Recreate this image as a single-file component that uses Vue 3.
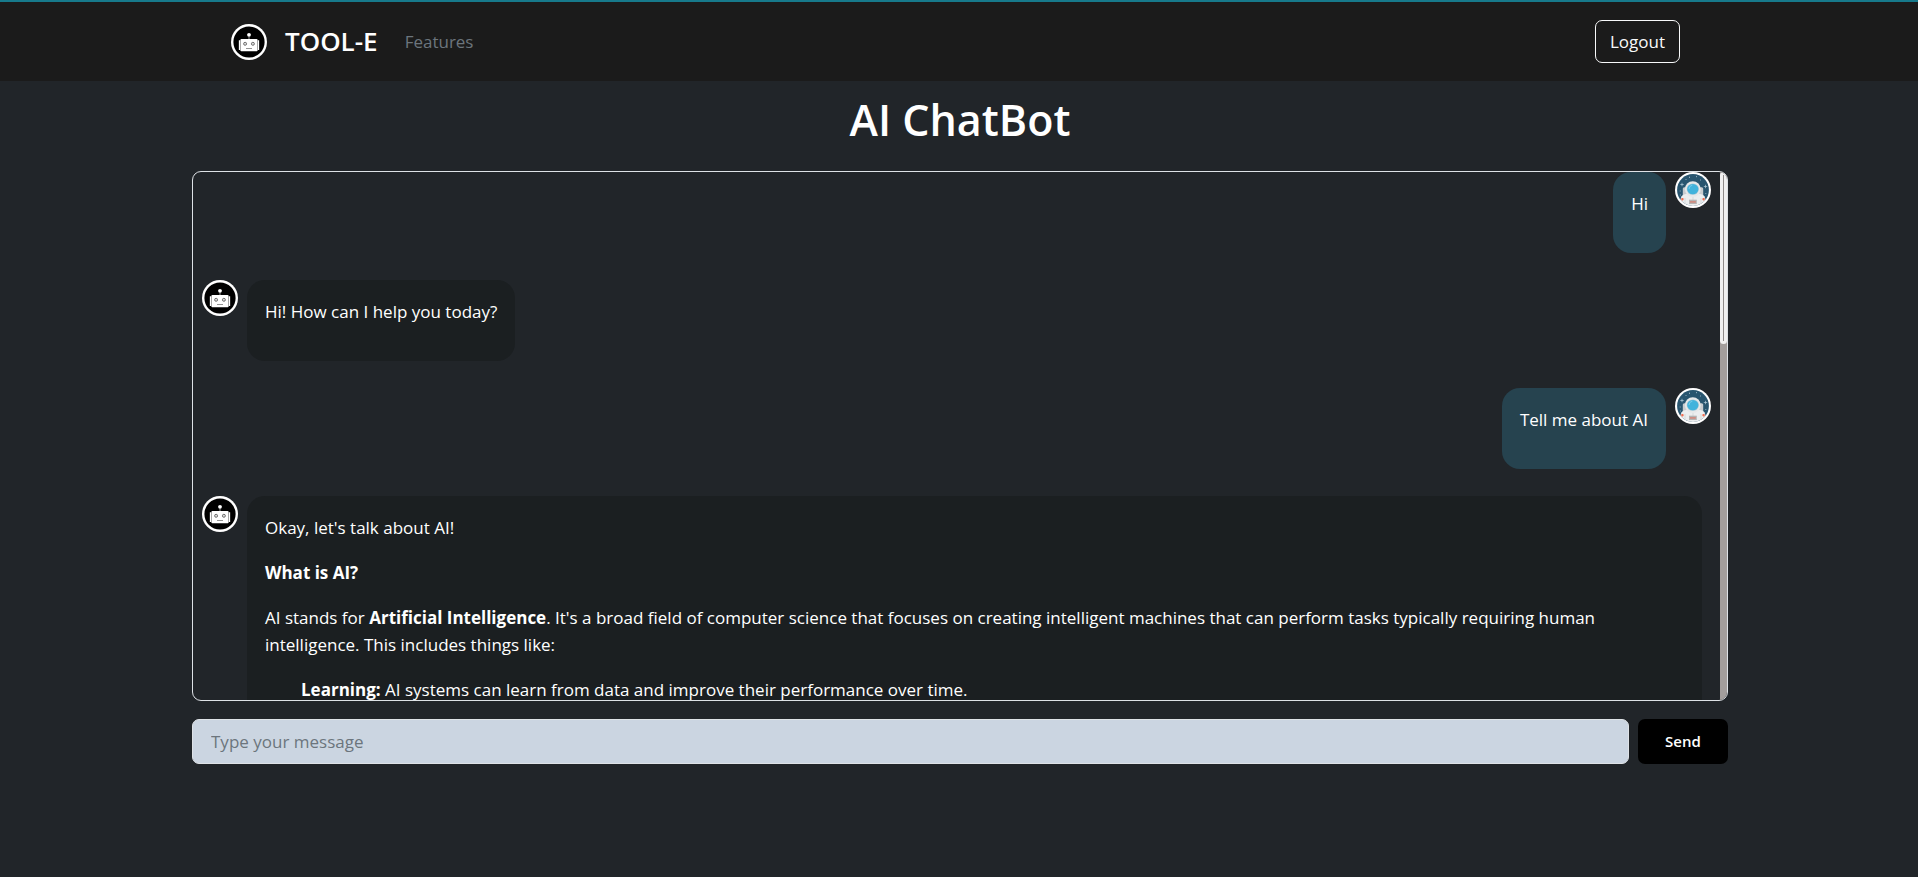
<script setup>
import { ref, h } from 'vue'

const draft = ref('')

const RobotAvatar = () =>
  h('svg', { viewBox: '0 0 36 36', width: 36, height: 36, role: 'img', 'aria-label': 'Bot' }, [
    h('circle', { cx: 18, cy: 18, r: 18, fill: '#fff' }),
    h('circle', { cx: 18, cy: 18, r: 15.6, fill: '#000' }),
    h('circle', { cx: 18, cy: 10.8, r: 1.9, fill: '#fff' }),
    h('path', { d: 'M18 12v3.5', stroke: '#bbb', 'stroke-width': 0.8 }),
    h('rect', { x: 9.4, y: 15, width: 17.2, height: 12.2, rx: 1, fill: '#fff' }),
    h('path', { d: 'M8.5 16.3v9.6M27.5 16.3v9.6', stroke: '#fff', 'stroke-width': 1.3 }),
    h('circle', { cx: 14.1, cy: 19.8, r: 1.5, fill: '#ddd', stroke: '#555', 'stroke-width': 0.8 }),
    h('circle', { cx: 21.9, cy: 19.8, r: 1.5, fill: '#ddd', stroke: '#555', 'stroke-width': 0.8 }),
    h('path', { d: 'M15 24.5h6', stroke: '#777', 'stroke-width': 0.8 })
  ])

const AstronautAvatar = () =>
  h('svg', { viewBox: '0 0 36 36', width: 36, height: 36, role: 'img', 'aria-label': 'You' }, [
    h('circle', { cx: 18, cy: 18, r: 18, fill: '#fff' }),
    h('circle', { cx: 18, cy: 18, r: 15.9, fill: '#28556f' }),
    h('path', {
      d: 'M7 10.8v3.4M5.3 12.5h3.4M30.5 12.8v3.4M28.8 14.5h3.4M14.5 4.6v1.4M21.5 4v1.2M11 7v1M25.5 7.5v1M5.2 18.5v1M5.4 22.5v1M30.8 21v1',
      stroke: '#b4cfdb',
      'stroke-width': 0.7
    }),
    h('rect', { x: 7.8, y: 15.3, width: 20.4, height: 13, rx: 1.5, fill: '#c9cdd0' }),
    h('path', {
      d: 'M5.4 27.8Q6 23.4 9 22.4L13 21.5h10l4 .9Q30 23.4 30.6 27.8A15.9 15.9 0 0 1 5.4 27.8Z',
      fill: '#eceeef'
    }),
    h('path', { d: 'M10 26v5.6M26 26v5.6M18 25v3', stroke: '#cfd2d4', 'stroke-width': 0.7 }),
    h('circle', { cx: 17.8, cy: 17.2, r: 7.9, fill: '#e6e8e9' }),
    h('ellipse', { cx: 17.8, cy: 17.1, rx: 6.1, ry: 5.7, fill: '#a9cbd8' }),
    h('ellipse', { cx: 17.8, cy: 17.1, rx: 5.6, ry: 5.2, fill: '#41b3dc' }),
    h('path', { d: 'M14 17q.2-3.4 3.4-3.8', fill: 'none', stroke: '#77cdea', 'stroke-width': 1 }),
    h('rect', { x: 14, y: 27.7, width: 7.8, height: 4.3, fill: '#b4b4b4' }),
    h('rect', { x: 15, y: 29, width: 5.8, height: 1.8, fill: '#cf8d82' }),
    h('rect', { x: 6.2, y: 26, width: 2.4, height: 2.4, rx: 0.8, fill: '#ee6f54' }),
    h('rect', { x: 27.4, y: 26, width: 2.4, height: 2.4, rx: 0.8, fill: '#ee6f54' })
  ])
</script>

<template>
  <div class="page">
    <header class="navbar">
      <a class="brand" href="#"><RobotAvatar /><span>TOOL-E</span></a>
      <nav><a class="nav-link" href="#">Features</a></nav>
      <button class="logout" type="button">Logout</button>
    </header>

    <main class="content">
      <h1>AI ChatBot</h1>

      <section class="chat" aria-label="Conversation">
        <div class="messages">
          <article class="message user">
            <div class="bubble"><p>Hi</p></div>
            <AstronautAvatar />
          </article>
          <article class="message">
            <RobotAvatar />
            <div class="bubble"><p>Hi! How can I help you today?</p></div>
          </article>
          <article class="message user">
            <div class="bubble"><p>Tell me about AI</p></div>
            <AstronautAvatar />
          </article>
          <article class="message">
            <RobotAvatar />
            <div class="bubble">
              <p>Okay, let's talk about AI!</p>
              <p><strong>What is AI?</strong></p>
              <p>
                AI stands for <strong>Artificial Intelligence</strong>. It's a broad field of computer science that
                focuses on creating intelligent machines that can perform tasks typically requiring human
                intelligence. This includes things like:
              </p>
              <ul>
                <li><strong>Learning:</strong> AI systems can learn from data and improve their performance over time.</li>
              </ul>
            </div>
          </article>
        </div>
        <div class="track"><div class="thumb"></div></div>
      </section>

      <form class="composer" @submit.prevent>
        <input v-model="draft" type="text" placeholder="Type your message" aria-label="Type your message" />
        <button type="submit">Send</button>
      </form>
    </main>
  </div>
</template>

<style>
body {
  margin: 0;
  background: #212529;
}
</style>

<style scoped>
.page {
  box-sizing: border-box;
  min-height: 100vh;
  background: #212529;
  color: #fff;
  font-family: "Open Sans", "Noto Sans", sans-serif;
  font-size: 17px;
  line-height: 27px;
}
.page *,
.page *::before {
  box-sizing: border-box;
}
svg {
  display: block;
  flex: none;
}
.navbar {
  display: flex;
  align-items: center;
  height: 81px;
  padding: 0 238px 0 231px;
  border-top: 2px solid #177a8c;
  background: #1b1b1b;
}
.brand {
  display: flex;
  align-items: center;
  gap: 18px;
  margin-right: 27px;
  color: #fff;
  font-size: 26px;
  font-weight: 600;
  text-decoration: none;
}
.nav-link {
  color: #6c757d;
  text-decoration: none;
}
.logout {
  height: 43px;
  margin-left: auto;
  padding: 0 14px;
  border: 1px solid #f8f9fa;
  border-radius: 7px;
  background: transparent;
  color: #f8f9fa;
  font: inherit;
}
.content {
  padding: 0 190px 0 192px;
}
h1 {
  margin: 0;
  padding: 12px 0 24px;
  font-size: 43px;
  font-weight: 600;
  line-height: 54px;
  text-align: center;
}
.chat {
  display: flex;
  height: 530px;
  overflow: hidden;
  border: 1px solid #dee2e6;
  border-radius: 9px;
}
.messages {
  flex: 1;
  min-width: 0;
  overflow: hidden;
  padding: 0 9px;
}
.message {
  display: flex;
  align-items: flex-start;
  gap: 9px;
  margin-bottom: 27px;
  padding-right: 9px;
}
.message.user {
  justify-content: flex-end;
  padding-right: 0;
}
.bubble {
  padding: 18px;
  border-radius: 18px;
  background: #1b1f21;
}
.user .bubble {
  background: #26434f;
}
p,
ul {
  margin: 0 0 18px;
}
ul {
  padding-left: 36px;
  list-style: none;
}
.track {
  flex: none;
  width: 7px;
  background: #a39e9c;
}
.thumb {
  height: 172px;
  padding: 3px;
  border-radius: 4px;
  background: #f1f1f1;
}
.thumb::before {
  content: "";
  display: block;
  width: 1px;
  height: 100%;
  background: #8f8b8a;
}
.composer {
  display: flex;
  gap: 9px;
  margin-top: 18px;
}
.composer input {
  flex: 1;
  min-width: 0;
  height: 45px;
  padding: 0 18px;
  border: 1px solid #dee2e6;
  border-radius: 7px;
  background: #cbd5e1;
  color: #212529;
  font: inherit;
}
.composer input::placeholder {
  color: #6c757d;
  opacity: 1;
}
.composer button {
  width: 90px;
  height: 45px;
  padding: 0;
  border: 0;
  border-radius: 7px;
  background: #000;
  color: #fff;
  font: inherit;
  font-size: 15px;
  font-weight: 600;
}
</style>
